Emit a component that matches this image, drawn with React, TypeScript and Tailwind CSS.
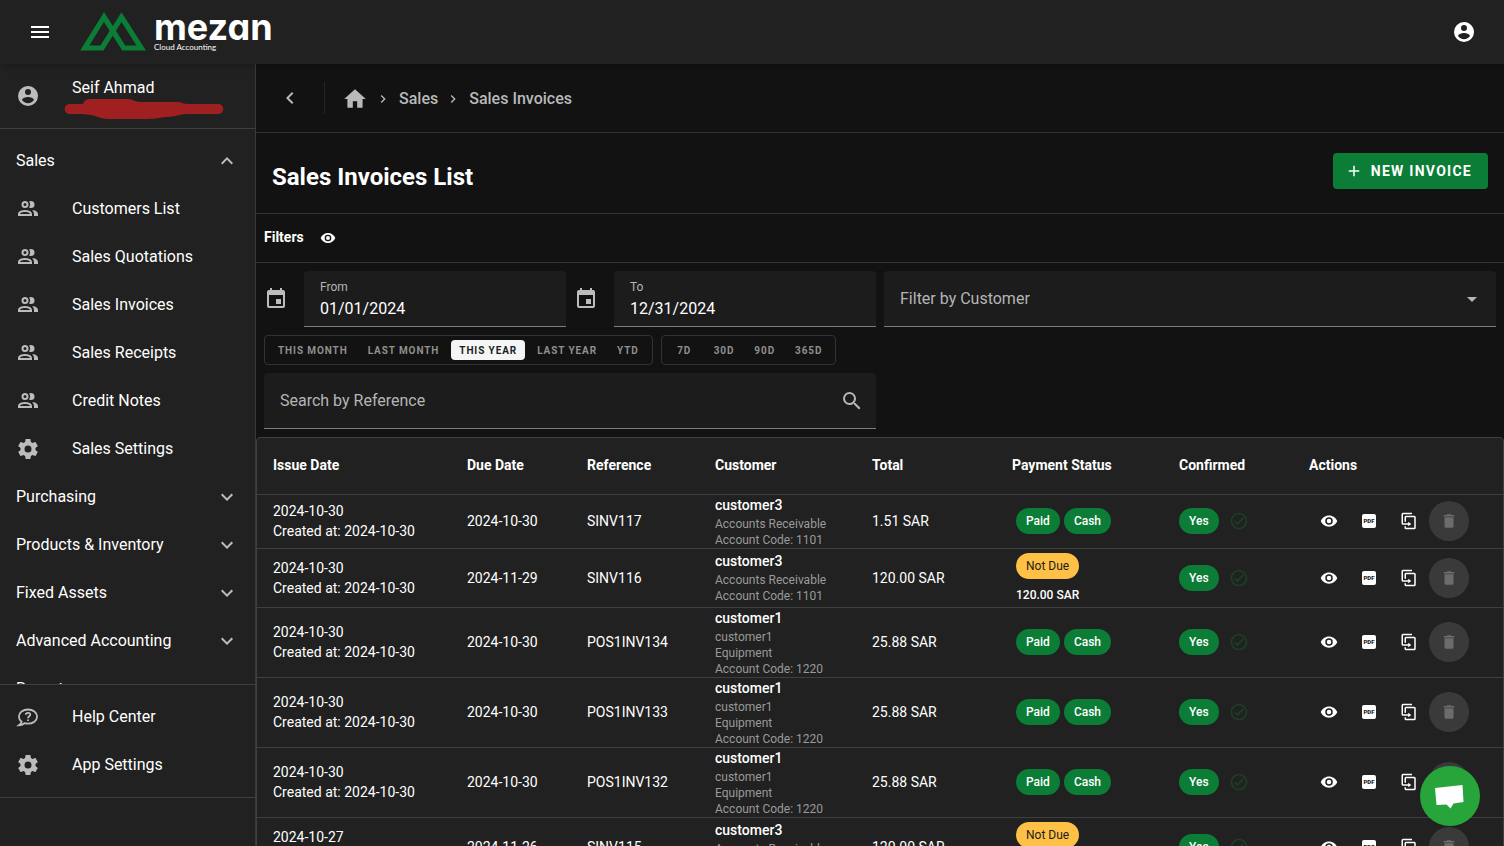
import { useState } from "react";
import clsx from "clsx";

const icons = {
  menu: "M3,6H21V8H3V6M3,11H21V13H3V11M3,16H21V18H3V16Z",
  account:
    "M12,19.2C9.5,19.2 7.29,17.92 6,16C6.03,14 10,12.9 12,12.9C14,12.9 17.97,14 18,16C16.71,17.92 14.5,19.2 12,19.2M12,5A3,3 0 0,1 15,8A3,3 0 0,1 12,11A3,3 0 0,1 9,8A3,3 0 0,1 12,5M12,2A10,10 0 0,0 2,12A10,10 0 0,0 12,22A10,10 0 0,0 22,12C22,6.47 17.5,2 12,2Z",
  chevronUp: "M7.41,15.41L12,10.83L16.59,15.41L18,14L12,8L6,14L7.41,15.41Z",
  chevronDown: "M7.41,8.58L12,13.17L16.59,8.58L18,10L12,16L6,10L7.41,8.58Z",
  chevronLeft: "M15.41,16.58L10.83,12L15.41,7.41L14,6L8,12L14,18L15.41,16.58Z",
  chevronRight: "M8.59,16.58L13.17,12L8.59,7.41L10,6L16,12L10,18L8.59,16.58Z",
  people:
    "M13.07 10.41A5 5 0 0 0 13.07 4.59A3.39 3.39 0 0 1 15 4A3.5 3.5 0 0 1 15 11A3.39 3.39 0 0 1 13.07 10.41M5.5 7.5A3.5 3.5 0 1 1 9 11A3.5 3.5 0 0 1 5.5 7.5M7.5 7.5A1.5 1.5 0 1 0 9 6A1.5 1.5 0 0 0 7.5 7.5M16 17V19H2V17S2 13 9 13 16 17 16 17M14 17C13.86 16.22 12.67 15 9 15S4.07 16.31 4 17M15.95 13A5.32 5.32 0 0 1 18 17V19H22V17S22 13.37 15.94 13Z",
  cog: "M12,15.5A3.5,3.5 0 0,1 8.5,12A3.5,3.5 0 0,1 12,8.5A3.5,3.5 0 0,1 15.5,12A3.5,3.5 0 0,1 12,15.5M19.43,12.97C19.47,12.65 19.5,12.33 19.5,12C19.5,11.67 19.47,11.34 19.43,11L21.54,9.37C21.73,9.22 21.78,8.95 21.66,8.73L19.66,5.27C19.54,5.05 19.27,4.96 19.05,5.05L16.56,6.05C16.04,5.66 15.5,5.32 14.87,5.07L14.5,2.42C14.46,2.18 14.25,2 14,2H10C9.75,2 9.54,2.18 9.5,2.42L9.13,5.07C8.5,5.32 7.96,5.66 7.44,6.05L4.95,5.05C4.73,4.96 4.46,5.05 4.34,5.27L2.34,8.73C2.21,8.95 2.27,9.22 2.46,9.37L4.57,11C4.53,11.34 4.5,11.67 4.5,12C4.5,12.33 4.53,12.65 4.57,12.97L2.46,14.63C2.27,14.78 2.21,15.05 2.34,15.27L4.34,18.73C4.46,18.95 4.73,19.03 4.95,18.95L7.44,17.94C7.96,18.34 8.5,18.68 9.13,18.93L9.5,21.58C9.54,21.82 9.75,22 10,22H14C14.25,22 14.46,21.82 14.5,21.58L14.87,18.93C15.5,18.67 16.04,18.34 16.56,17.94L19.05,18.95C19.27,19.03 19.54,18.95 19.66,18.73L21.66,15.27C21.78,15.05 21.73,14.78 21.54,14.63L19.43,12.97Z",
  home: "M10,20V14H14V20H19V12H22L12,3L2,12H5V20H10Z",
  eye: "M12,9A3,3 0 0,0 9,12A3,3 0 0,0 12,15A3,3 0 0,0 15,12A3,3 0 0,0 12,9M12,17A5,5 0 0,1 7,12A5,5 0 0,1 12,7A5,5 0 0,1 17,12A5,5 0 0,1 12,17M12,4.5C7,4.5 2.73,7.61 1,12C2.73,16.39 7,19.5 12,19.5C17,19.5 21.27,16.39 23,12C21.27,7.61 17,4.5 12,4.5Z",
  calendar:
    "M19,19H5V8H19M16,1V3H8V1H6V3H5C3.89,3 3,3.89 3,5V19A2,2 0 0,0 5,21H19A2,2 0 0,0 21,19V5C21,3.89 20.1,3 19,3H18V1M17,12H12V17H17V12Z",
  search:
    "M9.5,3A6.5,6.5 0 0,1 16,9.5C16,11.11 15.41,12.59 14.44,13.73L14.71,14H15.5L20.5,19L19,20.5L14,15.5V14.71L13.73,14.44C12.59,15.41 11.11,16 9.5,16A6.5,6.5 0 0,1 3,9.5A6.5,6.5 0 0,1 9.5,3M9.5,5C7,5 5,7 5,9.5C5,12 7,14 9.5,14C12,14 14,12 14,9.5C14,7 12,5 9.5,5Z",
  caret: "M7,10L12,15L17,10H7Z",
  plus: "M19,13H13V19H11V13H5V11H11V5H13V11H19V13Z",
  check:
    "M12 2C6.5 2 2 6.5 2 12S6.5 22 12 22 22 17.5 22 12 17.5 2 12 2M12 20C7.59 20 4 16.41 4 12S7.59 4 12 4 20 7.59 20 12 16.41 20 12 20M16.59 7.58L10 14.17L7.41 11.59L6 13L10 17L18 9L16.59 7.58Z",
  trash: "M19,4H15.5L14.5,3H9.5L8.5,4H5V6H19M6,19A2,2 0 0,0 8,21H16A2,2 0 0,0 18,19V7H6V19Z",
  duplicate:
    "M11,17H4A2,2 0 0,1 2,15V3A2,2 0 0,1 4,1H16V3H4V15H11V13L15,16L11,19V17M19,21V7H8V13H6V7A2,2 0 0,1 8,5H19A2,2 0 0,1 21,7V21A2,2 0 0,1 19,23H8A2,2 0 0,1 6,21V19H8V21H19Z",
};

function Icon({ name, className = "size-6" }: { name: keyof typeof icons; className?: string }) {
  return (
    <svg viewBox="0 0 24 24" fill="currentColor" aria-hidden="true" className={clsx("shrink-0", className)}>
      <path d={icons[name]} />
    </svg>
  );
}

function HelpIcon() {
  return (
    <svg viewBox="0 0 24 24" fill="none" stroke="currentColor" strokeWidth="1.8" aria-hidden="true" className="size-6 shrink-0">
      <path d="M5.6 16.8C3.9 15.5 2.9 13.7 2.9 11.6C2.9 7.5 7 4.5 12 4.500S21.1 7.5 21.1 11.6S17 18.7 12 18.7C10.7 18.7 9.5 18.5 8.4 18.2C6.8 19.5 4.7 20.2 2.9 20.3C4.4 19.3 5.3 18 5.6 16.8Z" />
      <path d="M9.7 9.8C9.8 8.5 10.7 7.8 12 7.8S14.3 8.5 14.3 9.6C14.3 11.3 12 11.3 12 13.2M12 14.4V16" />
    </svg>
  );
}

function Logo() {
  return (
    <a href="#" className="flex items-center gap-2 text-white">
      <svg viewBox="0 0 66 40" fill="none" stroke="#0b7d36" strokeWidth="5.2" aria-hidden="true" className="h-10 w-[66px]">
        <path d="M24 5L4.800 36H22L41.500 5L61.200 36H43.700Z" />
      </svg>
      <span className="flex flex-col">
        <span className="h-[30px] font-[Inter,sans-serif] text-4xl leading-[30px] font-bold [font-feature-settings:'cv11']">mezan</span>
        <span className="font-[Lato,sans-serif] text-[8px] leading-[10px]">Cloud Accounting</span>
      </span>
    </a>
  );
}

const salesLinks = ["Customers List", "Sales Quotations", "Sales Invoices", "Sales Receipts", "Credit Notes"];
const groups = ["Purchasing", "Products & Inventory", "Fixed Assets", "Advanced Accounting", "Reports"];

const itemClass = "flex h-12 w-full shrink-0 items-center px-4 text-left";

function Sidebar() {
  return (
    <aside className="flex w-64 shrink-0 flex-col border-r border-[#3a3a3a] bg-[#212121]">
      <div className="flex h-[65px] shrink-0 items-center border-b border-[#3f3f3f] pl-4">
        <Icon name="account" className="size-6 text-[#bcbcbc]" />
        <div className="ml-6 flex flex-col pt-1.5">
          <span className="pl-2 leading-5">Seif Ahmad</span>
          <svg viewBox="0 0 160 22" fill="#a01f20" aria-hidden="true" className="h-[22px] w-40">
            <path d="M6 6H19C20 2 23 1 28 1H64C69 1 71 4 76 4H115C119 5 120 6 124 6H154C161 6 161 16 154 16H122C116 16 112 19 102 19C94 20 88 21 84 21H44C37 21 33 18 27 17L18 16H6C-1 16-1 6 6 6Z" />
          </svg>
        </div>
      </div>

      <nav className="flex min-h-0 flex-1 flex-col overflow-y-auto pt-2 [scrollbar-width:none]">
        <button type="button" className={clsx(itemClass, "justify-between")}>
          Sales
          <Icon name="chevronUp" className="size-6 text-[#bcbcbc]" />
        </button>
        {salesLinks.map((label) => (
          <a key={label} href="#" className={itemClass}>
            <Icon name="people" className="mr-8 size-6 text-[#bcbcbc]" />
            {label}
          </a>
        ))}
        <a href="#" className={itemClass}>
          <Icon name="cog" className="mr-8 size-6 text-[#bcbcbc]" />
          Sales Settings
        </a>
        {groups.map((label) => (
          <button key={label} type="button" className={clsx(itemClass, "justify-between")}>
            {label}
            <Icon name="chevronDown" className="size-6 text-[#bcbcbc]" />
          </button>
        ))}
      </nav>

      <div className="mb-12 border-y border-[#3f3f3f] py-2">
        <a href="#" className={itemClass}>
          <span className="mr-8 text-[#bcbcbc]">
            <HelpIcon />
          </span>
          Help Center
        </a>
        <a href="#" className={itemClass}>
          <Icon name="cog" className="mr-8 size-6 text-[#bcbcbc]" />
          App Settings
        </a>
      </div>
    </aside>
  );
}

function DateField({ id, label, value }: { id: string; label: string; value: string }) {
  return (
    <div className="flex items-center gap-4">
      <Icon name="calendar" className="size-6 text-[#bcbcbc]" />
      <div className="flex h-14 min-w-0 flex-1 flex-col rounded-t border-b border-[#7d7d7d] bg-[#1c1c1c] px-4 pt-2">
        <label htmlFor={id} className="text-xs leading-4 text-[#b5b5b5]">
          {label}
        </label>
        <input id={id} type="text" defaultValue={value} className="h-[26px] w-full bg-transparent outline-none" />
      </div>
    </div>
  );
}

function PresetGroup({ options, active, onSelect }: { options: string[]; active: string; onSelect: (v: string) => void }) {
  return (
    <div className="flex h-[30px] items-center gap-1 rounded border border-[#333333] px-[5px]">
      {options.map((option) => (
        <button
          key={option}
          type="button"
          onClick={() => onSelect(option)}
          className={clsx(
            "h-5 min-w-[35px] rounded px-2 text-[10px] font-bold tracking-[0.09em] uppercase",
            option === active ? "bg-[#f5f5f5] text-[#1c1c1c]" : "text-[#8f8f8f]"
          )}
        >
          {option}
        </button>
      ))}
    </div>
  );
}

function Filters() {
  const [preset, setPreset] = useState("This Year");

  return (
    <section className="flex flex-col gap-2 p-2">
      <div className="grid grid-cols-4 gap-2">
        <DateField id="from" label="From" value="01/01/2024" />
        <DateField id="to" label="To" value="12/31/2024" />
        <div className="col-span-2 flex h-14 items-center rounded-t border-b border-[#7d7d7d] bg-[#1c1c1c] pr-3 text-[#b5b5b5]">
          <select aria-label="Filter by Customer" className="h-full flex-1 appearance-none bg-transparent pl-4 outline-none">
            <option>Filter by Customer</option>
          </select>
          <Icon name="caret" />
        </div>
      </div>
      <div className="flex gap-2">
        <PresetGroup options={["This Month", "Last Month", "This Year", "Last Year", "YTD"]} active={preset} onSelect={setPreset} />
        <PresetGroup options={["7D", "30D", "90D", "365D"]} active={preset} onSelect={setPreset} />
      </div>
      <div className="grid grid-cols-2 gap-2">
        <div className="flex h-14 items-center rounded-t border-b border-[#7d7d7d] bg-[#1c1c1c] pr-3 text-[#b5b5b5]">
          <input
            type="text"
            aria-label="Search by Reference"
            placeholder="Search by Reference"
            className="h-full flex-1 bg-transparent pl-4 outline-none placeholder:text-[#b5b5b5]"
          />
          <Icon name="search" />
        </div>
      </div>
    </section>
  );
}

type Invoice = {
  date: string;
  due: string;
  reference: string;
  customer: string;
  details: string[];
  total: string;
  paid: boolean;
};

const receivable = ["Accounts Receivable", "Account Code: 1101"];
const equipment = ["customer1", "Equipment", "Account Code: 1220"];

const invoices: Invoice[] = [
  { date: "2024-10-30", due: "2024-10-30", reference: "SINV117", customer: "customer3", details: receivable, total: "1.51 SAR", paid: true },
  { date: "2024-10-30", due: "2024-11-29", reference: "SINV116", customer: "customer3", details: receivable, total: "120.00 SAR", paid: false },
  { date: "2024-10-30", due: "2024-10-30", reference: "POS1INV134", customer: "customer1", details: equipment, total: "25.88 SAR", paid: true },
  { date: "2024-10-30", due: "2024-10-30", reference: "POS1INV133", customer: "customer1", details: equipment, total: "25.88 SAR", paid: true },
  { date: "2024-10-30", due: "2024-10-30", reference: "POS1INV132", customer: "customer1", details: equipment, total: "25.88 SAR", paid: true },
  { date: "2024-10-27", due: "2024-11-26", reference: "SINV115", customer: "customer3", details: receivable, total: "120.00 SAR", paid: false },
];

const columns = [
  { label: "Issue Date", width: "w-[194px]" },
  { label: "Due Date", width: "w-[120px]" },
  { label: "Reference", width: "w-[128px]" },
  { label: "Customer", width: "w-[157px]" },
  { label: "Total", width: "w-[140px]" },
  { label: "Payment Status", width: "w-[167px]" },
  { label: "Confirmed", width: "w-[130px]" },
  { label: "Actions", width: "w-[210px]" },
];

function Chip({ label, warning = false }: { label: string; warning?: boolean }) {
  return (
    <span
      className={clsx(
        "inline-flex h-[26px] items-center rounded-full px-2.5 text-xs",
        warning ? "bg-[#ffc145] text-[#1c1c1c]" : "bg-[#0b7d36] font-medium text-white"
      )}
    >
      {label}
    </span>
  );
}

const actionClass = "flex size-10 items-center justify-center rounded-full";

function InvoiceRow({ invoice }: { invoice: Invoice }) {
  return (
    <tr className="border-t border-[#3f3f3f]">
      <td className="px-4 leading-5">
        <div>{invoice.date}</div>
        <div>Created at: {invoice.date}</div>
      </td>
      <td className="px-4">{invoice.due}</td>
      <td className="px-4">{invoice.reference}</td>
      <td className="px-4">
        <div className="mb-px leading-5 font-medium">{invoice.customer}</div>
        {invoice.details.map((line) => (
          <div key={line} className="text-xs leading-4 text-[#9a9a9a]">
            {line}
          </div>
        ))}
      </td>
      <td className="px-4">{invoice.total}</td>
      <td className="px-5">
        {invoice.paid ? (
          <div className="flex gap-1">
            <Chip label="Paid" />
            <Chip label="Cash" />
          </div>
        ) : (
          <div className="flex flex-col items-start gap-2 py-1">
            <Chip label="Not Due" warning />
            <span className="text-xs leading-4 font-medium">{invoice.total}</span>
          </div>
        )}
      </td>
      <td className="px-4">
        <div className="flex items-center gap-2.5">
          <Chip label="Yes" />
          <Icon name="check" className="size-5 text-[#1d3f26]" />
        </div>
      </td>
      <td className="px-4">
        <div className="flex">
          <button type="button" aria-label="View" className={actionClass}>
            <Icon name="eye" className="size-[18px]" />
          </button>
          <button type="button" aria-label="Download PDF" className={actionClass}>
            <span className="flex size-3.5 items-center justify-center rounded-xs bg-white text-[6px] leading-none font-black text-[#212121]">
              PDF
            </span>
          </button>
          <button type="button" aria-label="Duplicate" className={actionClass}>
            <Icon name="duplicate" className="size-[18px]" />
          </button>
          <button type="button" aria-label="Delete" disabled className={clsx(actionClass, "bg-[#3a3a3a] text-[#6c6c6c]")}>
            <Icon name="trash" className="size-[18px]" />
          </button>
        </div>
      </td>
    </tr>
  );
}

function InvoiceTable() {
  return (
    <div className="rounded border border-[#3f3f3f] bg-[#212121]">
      <table className="w-full table-fixed border-collapse text-sm">
        <thead>
          <tr>
            {columns.map(({ label, width }) => (
              <th key={label} className={clsx("h-14 px-4 pb-0.5 text-left font-bold", width)}>
                {label}
              </th>
            ))}
          </tr>
        </thead>
        <tbody>
          {invoices.map((invoice) => (
            <InvoiceRow key={invoice.reference} invoice={invoice} />
          ))}
        </tbody>
      </table>
    </div>
  );
}

export default function App() {
  return (
    <div className="flex h-screen flex-col overflow-hidden bg-[#121212] font-[Roboto,sans-serif] text-base text-white">
      <header className="z-10 flex h-16 shrink-0 items-center justify-between bg-[#212121] px-7 shadow-md">
        <div className="flex items-center gap-7">
          <button type="button" aria-label="Toggle menu">
            <Icon name="menu" />
          </button>
          <Logo />
        </div>
        <button type="button" aria-label="Account">
          <Icon name="account" />
        </button>
      </header>

      <div className="flex min-h-0 flex-1">
        <Sidebar />
        <main className="min-w-0 flex-1 overflow-y-auto [scrollbar-width:none]">
          <div className="flex h-[69px] items-center border-b border-[#333333] pl-[22px] font-medium text-[#b9b9b9]">
            <button type="button" aria-label="Back">
              <Icon name="chevronLeft" />
            </button>
            <div className="ml-[22px] h-8 border-l border-[#242424]" />
            <nav aria-label="Breadcrumb" className="ml-[17px] flex items-center pt-px">
              <a href="#" aria-label="Home">
                <Icon name="home" className="size-[26px]" />
              </a>
              <Icon name="chevronRight" className="mr-2 ml-[7px] size-4" />
              <a href="#">Sales</a>
              <Icon name="chevronRight" className="mr-2 ml-[7px] size-4" />
              <a href="#">Sales Invoices</a>
            </nav>
          </div>

          <div className="flex h-[81px] items-start justify-between border-b border-[#333333] px-4 pt-5">
            <h1 className="mt-2 text-2xl leading-8 font-bold">Sales Invoices List</h1>
            <button
              type="button"
              className="flex h-9 items-center gap-2 rounded bg-[#0b7d36] px-3 pr-4 text-sm font-bold tracking-[0.09em] uppercase"
            >
              <Icon name="plus" className="size-[18px]" />
              New Invoice
            </button>
          </div>

          <div className="flex h-[49px] items-center gap-4 border-b border-[#333333] px-2">
            <h2 className="pb-0.5 text-sm font-bold">Filters</h2>
            <button type="button" aria-label="Toggle filters">
              <Icon name="eye" className="size-4" />
            </button>
          </div>

          <Filters />
          <InvoiceTable />
        </main>
      </div>

      <button
        type="button"
        aria-label="Open chat"
        className="fixed right-6 bottom-5 z-20 size-[60px] rounded-full bg-[#27a53b]"
      >
        <svg viewBox="0 0 60 60" fill="white" aria-hidden="true">
          <path d="M15 22L42.5 19L43.5 36L33.5 37.5L30.5 42.5L26.5 38.5L16.5 39Z" />
        </svg>
      </button>
    </div>
  );
}
